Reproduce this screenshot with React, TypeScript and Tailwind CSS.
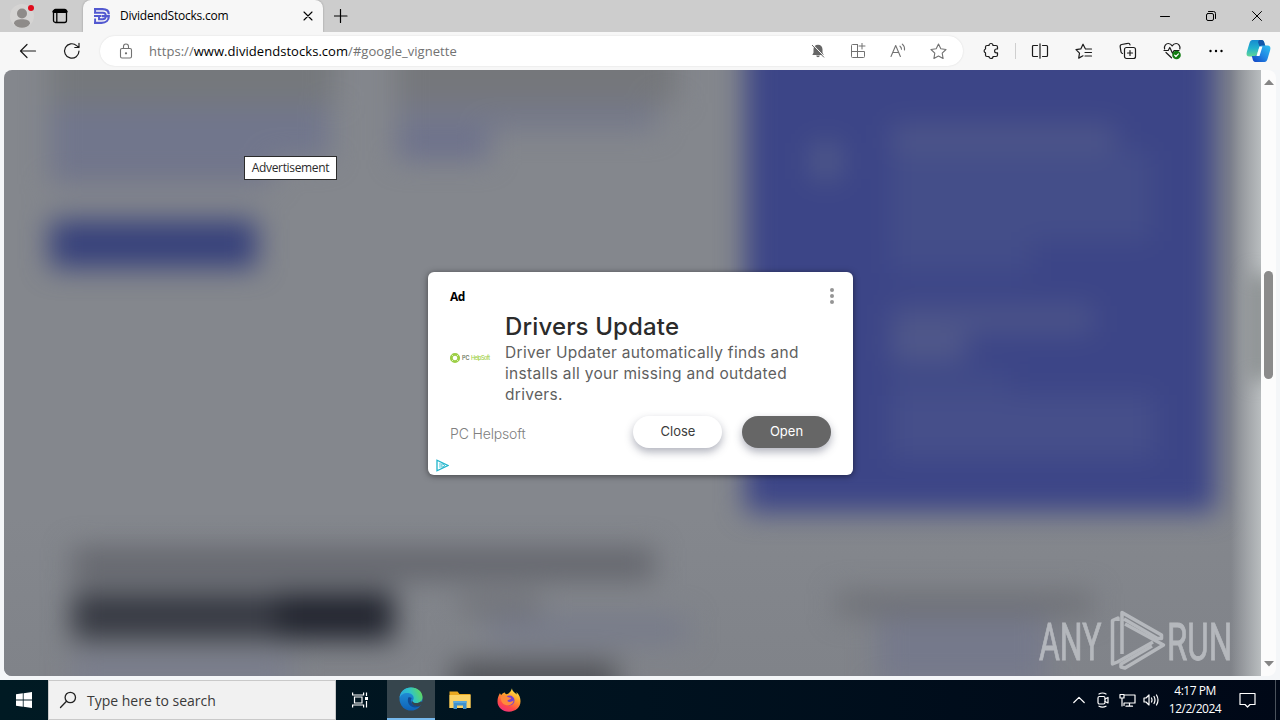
import type { ReactNode } from 'react'

const stroke = { fill: 'none', stroke: 'currentColor', strokeLinecap: 'round', strokeLinejoin: 'round' } as const

function Cell({ children, className = '' }: { children: ReactNode; className?: string }) {
  return <div className={`flex h-full shrink-0 items-center justify-center ${className}`}>{children}</div>
}

function SiteLogo() {
  return (
    <svg width="16" height="16" viewBox="0 0 16 16" fill="none" stroke="#5359d0" strokeWidth="2.200">
      <path d="M0 1.200h8.500c4 0 6.300 2 6.300 5M0 14.800h7.500c4.500 0 7.300-2.600 7.300-6.600H8" />
      <path d="M1.100 0v5M0 4.800h9c1.700 0 2.800 1.400 2.800 3.200s-1.100 3.300-3.200 3.300H5V7.800M0 8h7.500M1.100 16V10.500" strokeWidth="1.900" />
    </svg>
  )
}

function TabStrip() {
  return (
    <div className="flex h-8 bg-[#cdcdcd]">
      <Cell className="w-11">
        <svg width="30" height="28" viewBox="0 0 30 28">
          <circle cx="15" cy="14" r="12" fill="#d5d4d3" />
          <circle cx="15" cy="11.500" r="5" fill="#8e8b89" />
          <path d="M7 21.500c0-3 3.500-4.200 8-4.200s8 1.200 8 4.200c-1.500 3-4.500 4.200-8 4.200s-6.500-1.200-8-4.200z" fill="#8e8b89" />
          <circle cx="24" cy="6" r="3" fill="#e00b1c" />
        </svg>
      </Cell>
      <Cell className="w-8">
        <svg width="16" height="16" viewBox="0 0 16 16" {...stroke} strokeWidth="1.300">
          <rect x="1.500" y="1.500" width="13" height="13" rx="2" />
          <path d="M2 3.500h12" strokeWidth="3.200" />
          <path d="M4.800 5v9" />
        </svg>
      </Cell>
      <div className="ml-[7px] flex w-60 items-center rounded-t-lg bg-[#f7f7f7] pl-[11px] pr-2.5 shadow-[0_0_2px_rgba(0,0,0,0.3)]">
        <SiteLogo />
        <span className="ml-[10px] flex-1 text-[12px] tracking-[-0.240px] text-black">DividendStocks.com</span>
        <svg width="10" height="10" viewBox="0 0 10 10" {...stroke} strokeWidth="1.100">
          <path d="M1 1l8 8M9 1L1 9" />
        </svg>
      </div>
      <Cell className="w-9">
        <svg width="14" height="14" viewBox="0 0 14 14" {...stroke} strokeWidth="1.200">
          <path d="M6.500 .5v13M0 7h13" />
        </svg>
      </Cell>
      <div className="flex-1" />
      <Cell className="w-[46px]">
        <svg width="10" height="10" viewBox="0 0 10 10" {...stroke}>
          <path d="M.5 5.500h9" />
        </svg>
      </Cell>
      <Cell className="w-[46px]">
        <svg width="10" height="10" viewBox="0 0 10 10" {...stroke}>
          <rect x=".5" y="2.500" width="7" height="7" rx="1.500" />
          <path d="M2.500.5h5a2 2 0 0 1 2 2v5" />
        </svg>
      </Cell>
      <Cell className="w-[46px]">
        <svg width="10" height="10" viewBox="0 0 10 10" {...stroke}>
          <path d="M.5.5l9 9M9.500.5l-9 9" />
        </svg>
      </Cell>
    </div>
  )
}

function AddressBar() {
  return (
    <div className="flex h-[30px] w-[863px] items-center rounded-full bg-white pr-[5px] text-[#727272] shadow-[0_0_2px_rgba(0,0,0,0.12)]">
      <Cell className="w-[52px]">
        <svg width="14" height="16" viewBox="0 0 14 16" {...stroke} strokeWidth="1.100">
          <rect x="1.500" y="5.500" width="11" height="9.500" rx="1.500" />
          <path d="M4.500 5.500V3.500a2.500 2.500 0 0 1 5 0v2" />
          <circle cx="7" cy="10.300" r=".6" fill="currentColor" />
        </svg>
      </Cell>
      <div className="-ml-[3px] mt-px flex-1 whitespace-nowrap text-[13px] tracking-[0.050px]">
        https://<span className="text-black">www.dividendstocks.com</span>/#google_vignette
      </div>
      <Cell className="w-10">
        <svg width="14" height="14" viewBox="0 0 14 14">
          <path d="M7 .8c2.700 0 4.500 1.900 4.500 4.400v3.500l1.200 2.300H1.300l1.200-2.300V5.200C2.500 2.700 4.300.8 7 .8zM5.200 11.500h3.600c-.2 1.100-.9 1.700-1.800 1.700s-1.600-.6-1.800-1.700z" fill="#666" />
          <path d="M2 .8l12 12.400" stroke="#fff" />
          <path d="M1 1l12 12.400" stroke="#666" />
        </svg>
      </Cell>
      <Cell className="w-10">
        <svg width="16" height="16" viewBox="0 0 16 16" {...stroke}>
          <path d="M7.500 1.500h-5a1 1 0 0 0-1 1v11a1 1 0 0 0 1 1h11a1 1 0 0 0 1-1v-5h-13M7.500 1.500v13M12 0v6M9 3h6" />
        </svg>
      </Cell>
      <Cell className="w-10">
        <svg width="17" height="16" viewBox="0 0 17 16" {...stroke} strokeWidth="1.100">
          <path d="M1 13.500L5.700 2.500l4.700 11M2.800 9.500h5.900M10 3.200c1 .8 1.500 1.700 1.500 3M12.300 1.200c1.700 1.400 2.500 3.400 2.200 5.800" />
        </svg>
      </Cell>
      <Cell className="w-10">
        <svg width="17" height="17" viewBox="0 0 17 17" {...stroke} strokeWidth="1.100">
          <path d="M8.500 1l2.300 4.800 5.200.7-3.800 3.700.9 5.300-4.600-2.500-4.600 2.500.9-5.300L1 6.500l5.200-.7z" />
        </svg>
      </Cell>
    </div>
  )
}

function Copilot() {
  return (
    <svg width="25" height="24" viewBox="0 0 25 24">
      <defs>
        <linearGradient id="cpA" x1="0" y1="0" x2="0" y2="1">
          <stop offset="0" stopColor="#168bd0" />
          <stop offset=".5" stopColor="#22b1ce" />
          <stop offset="1" stopColor="#62d694" />
        </linearGradient>
        <linearGradient id="cpB" x1="1" y1="0" x2="0" y2="1">
          <stop offset="0" stopColor="#2fc1f1" />
          <stop offset=".5" stopColor="#2187e4" />
          <stop offset="1" stopColor="#123fc1" />
        </linearGradient>
      </defs>
      <path d="M6.500 1h9c2 0 2.500 1.500 3 3.500l.8 2.500h-3c-2 0-3 1-3.500 3l-1.500 5c-.6 2-1.500 2.500-3.500 2.500H3.500c-2.500 0-3.500-1.500-2.700-4.500L3.500 4c.6-2 1.500-3 3-3z" fill="url(#cpA)" />
      <path d="M13 1h2.500c2 0 2.500 1.500 3 3.500l.8 2.500H16c-2 0-2.500.5-3-1L12 3z" fill="#1456a9" />
      <path d="M18.500 23h-9c-2 0-2.500-1.500-3-3.500L5.800 17h2.500c2 0 3-1 3.500-3l1.500-5c.6-2 1.500-2.500 3.500-2.500h4.700c2.500 0 3.500 1.500 2.700 4.500L21.500 20c-.6 2-1.500 3-3 3z" fill="url(#cpB)" />
      <path d="M13.500 7.500h3l-3 9.500h-3z" fill="#fff" />
    </svg>
  )
}

function Toolbar() {
  return (
    <div className="flex h-[38px] items-center bg-[#f7f7f7] text-[#1b1b1b]">
      <Cell className="w-14">
        <svg width="18" height="16" viewBox="0 0 18 16" {...stroke} strokeWidth="1.200">
          <path d="M16.500 8H1.500M8 1.500L1.500 8 8 14.500" />
        </svg>
      </Cell>
      <Cell className="mr-3 w-8">
        <svg width="18" height="18" viewBox="0 0 18 18" {...stroke} strokeWidth="1.200">
          <path d="M16 9a7.200 7.200 0 1 1-2.400-5.400L16 5.500M16 1.300v4.200h-4.200" />
        </svg>
      </Cell>
      <AddressBar />
      <Cell className="ml-[7px] w-11">
        <svg width="18" height="18" viewBox="0 0 18 18" {...stroke} strokeWidth="1.200">
          <path d="M6 3.500a2 2 0 0 1 4 0h3a1.500 1.500 0 0 1 1.500 1.500v2h-1a1.900 1.900 0 0 0 0 3.800h1v2.200a1.500 1.500 0 0 1-1.500 1.500h-3a2 2 0 0 1-4 0H4A1.500 1.500 0 0 1 2.500 13v-2.200a2 2 0 0 1 0-3.800V5A1.500 1.500 0 0 1 4 3.500z" />
        </svg>
      </Cell>
      <div className="mx-px h-4 w-px bg-[#cfcfcf]" />
      <Cell className="w-[45px]">
        <svg width="18" height="16" viewBox="0 0 18 16" {...stroke} strokeWidth="1.200">
          <path d="M6.500 2.500h-4a1 1 0 0 0-1 1v9a1 1 0 0 0 1 1h4M11.500 2.500h4a1 1 0 0 1 1 1v9a1 1 0 0 1-1 1h-4M9 .8v14.400" />
        </svg>
      </Cell>
      <Cell className="w-11">
        <svg width="18" height="17" viewBox="0 0 18 17" {...stroke} strokeWidth="1.200">
          <path d="M10.200 5.500L8 1.200 5.800 5.900l-4.800.7 3.500 3.500-.8 5 4.300-2.300M10.500 6h6M10 9.500h6.500M10 13h6.500" />
        </svg>
      </Cell>
      <Cell className="w-11">
        <svg width="18" height="18" viewBox="0 0 18 18" {...stroke} strokeWidth="1.200">
          <path d="M3.500 11.500a2 2 0 0 1-1.500-1.600L1.200 4.800a2 2 0 0 1 1.600-2.300l5.800-1.200A2 2 0 0 1 11 2.800" />
          <rect x="5.500" y="5.500" width="11" height="11" rx="2" />
          <path d="M11 8.500v5M8.500 11h5" />
        </svg>
      </Cell>
      <Cell className="w-11">
        <svg width="19" height="18" viewBox="0 0 19 18" {...stroke} strokeWidth="1.200">
          <path d="M1.600 7C.8 3.800 3 1.500 5.300 1.500c1.800 0 3 1 3.900 2.400.9-1.400 2.100-2.400 3.900-2.400 2.300 0 4.500 2.300 3.700 5.500M3 10.500l5.500 5.300M1 8.500h4.200l1.600-3 2.700 5.700 1.600-2.700H16" />
          <circle cx="13.500" cy="13" r="4.300" fill="#107c10" stroke="none" />
          <path d="M11.600 13.200l1.300 1.300 2.500-2.600" stroke="#fff" />
        </svg>
      </Cell>
      <Cell className="w-11">
        <svg width="16" height="4" viewBox="0 0 16 4">
          <circle cx="2.500" cy="2" r="1.200" />
          <circle cx="8" cy="2" r="1.200" />
          <circle cx="13.500" cy="2" r="1.200" />
        </svg>
      </Cell>
      <Cell className="w-10">
        <Copilot />
      </Cell>
    </div>
  )
}

// The article behind the vignette ad, dimmed and blurred out
function BlurredPage() {
  return (
    <div className="absolute -top-10 left-0 h-[700px] w-[1257px] blur-[14px]">
      <div className="flex h-[482px]">
        <div className="ml-[46px] w-[347px]">
          <div className="h-[75px] w-[285px] bg-[#75787c]" />
          <div className="h-[55px] w-[280px] bg-[#71768c]" />
          <div className="h-[24px] w-[222px] bg-[#71758b]" />
          <div className="mt-[36px] h-[48px] w-[207px] bg-[#37417b]" />
        </div>
        <div className="w-[348px]">
          <div className="h-[73px] w-[280px] bg-[#75777b]" />
          <div className="h-[27px] w-[260px] bg-[#74788a]" />
          <div className="h-[30px] w-[92px] bg-[#6d718c]" />
        </div>
        <div className="flex w-[471px] bg-[#3c4587] pt-[95px]">
          <div className="ml-[66px] mt-[18px] h-[36px] w-[30px] bg-[#515a89]" />
          <div className="ml-[50px] w-[260px]">
            <div className="h-[26px] w-[225px] bg-[#4e5689]" />
            <div className="h-[90px] bg-[#444e89]" />
            <div className="h-[32px] w-[140px] bg-[#434d89]" />
            <div className="mt-[32px] h-[28px] w-[202px] bg-[#4c5489]" />
            <div className="h-[28px] w-[75px] bg-[#51598a]" />
            <div className="mt-[8px] h-[26px] w-[120px] bg-[#414b88]" />
            <div className="h-[64px] w-[264px] bg-[#464f8a]" />
          </div>
        </div>
      </div>
      <div className="flex pt-[36px]">
        <div className="ml-[68px] w-[380px]">
          <div className="h-[32px] w-[582px] bg-[#64666d]" />
          <div className="mt-[12px] flex h-[48px] w-[322px] bg-[#373a43]">
            <div className="ml-[205px] w-[117px] bg-[#22252f]" />
          </div>
          <div className="mt-[16px] h-[30px] w-[220px] bg-[#797d8d]" />
        </div>
        <div className="w-[385px] pt-[46px]">
          <div className="ml-[8px] h-[22px] w-[80px] bg-[#717379]" />
          <div className="ml-[36px] h-[28px] w-[200px] bg-[#777b8a]" />
          <div className="mt-[18px] h-[40px] w-[165px] bg-[#515358]" />
        </div>
        <div className="pt-[44px]">
          <div className="h-[24px] w-[255px] bg-[#6e7076]" />
          <div className="ml-[40px] h-[70px] w-[170px] bg-[#75798b]" />
        </div>
      </div>
    </div>
  )
}

function AdCard() {
  return (
    <div className="absolute left-[424px] top-[202px] flex h-[203px] w-[425px] flex-col rounded-md bg-white pl-[22px] pr-[22px] font-[Inter,sans-serif] shadow-[0_1px_6px_rgba(0,0,0,0.5)]">
      <div className="flex h-[42px] items-end justify-between pt-4">
        <span className="self-start font-['Open_Sans',sans-serif] text-[12px] font-bold leading-[18px] tracking-[-0.500px] text-black">Ad</span>
        <svg className="-mr-[5px] self-start" width="8" height="16" viewBox="0 0 8 16" fill="#959595">
          <circle cx="4" cy="2" r="2" />
          <circle cx="4" cy="8" r="2" />
          <circle cx="4" cy="14" r="2" />
        </svg>
      </div>
      <div className="-mt-px flex h-[93px]">
        <div className="flex w-[55px] items-center pb-[3px]">
          <svg width="41" height="12" viewBox="0 0 41 12">
            <circle cx="5" cy="6" r="3.700" fill="none" stroke="#9ccf45" strokeWidth="2.800" />
            <path d="M1 2l2.500 2.500M9 10L6.500 7.500M1 10l2.500-2.500M9 2L6.500 4.500" stroke="#dcefbc" />
            <text x="12" y="8" fontSize="5.500" fontWeight="600" fill="#6f7a64" textLength="7.500">PC</text>
            <text x="21" y="8" fontSize="5.500" fontWeight="500" fill="#9ccf45" textLength="19">HelpSoft</text>
          </svg>
        </div>
        <div className="flex-1 whitespace-nowrap">
          <h1 className="text-[24px] font-medium leading-[28px] tracking-[0.150px] text-[#2b2b2b]">Drivers Update</h1>
          <p className="mt-px text-[15.500px] leading-[21px] tracking-[0.320px] text-[#5f5f5f]">
            Driver Updater automatically finds and
            <br />
            installs all your missing and outdated
            <br />
            drivers.
          </p>
        </div>
      </div>
      <div className="mt-[10px] flex h-8 items-center">
        <span className="mt-[3px] flex-1 text-[14px] font-light tracking-[-0.150px] text-[#808080]">PC Helpsoft</span>
        <button className="mr-5 h-8 w-[89px] rounded-full bg-white pl-px text-[13px] text-[#3c3c3c] shadow-[0_4px_8px_rgba(60,64,90,0.4)]">Close</button>
        <button className="h-8 w-[89px] rounded-full bg-[#666666] text-[13px] text-white shadow-[0_4px_8px_rgba(60,64,90,0.4)]">Open</button>
      </div>
      <svg className="-ml-[14px] mt-[11px]" width="13" height="13" viewBox="0 0 13 13" fill="none" stroke="#1fb5cc" strokeWidth="1.300">
        <path d="M1 1.200v10.600L12 6.500z" />
        <path d="M4 3.800v5M5.800 4.500v4l3.200-2z" strokeWidth=".8" />
      </svg>
    </div>
  )
}

function Watermark() {
  return (
    <svg className="absolute left-[1030px] top-[535px]" width="205" height="70" viewBox="0 0 205 70" opacity=".75">
      <g fill="#c7cace" stroke="#c7cace" strokeWidth=".9" fontFamily="Roboto, sans-serif" fontSize="52">
        <text transform="translate(5 54.500) scale(.615 1)">ANY</text>
        <text transform="translate(133 54.500) scale(.635 1)">RUN</text>
      </g>
      <g fill="none" stroke="#c7cace" strokeWidth="3.500" strokeLinejoin="round">
        <path d="M84 16v-3l-5.500 2.500v43.500l5-2L119 37" />
        <path d="M88 49V7.500l39.500 22.500v3.500h-4L90 14" />
        <path d="M91 19l38.500 21L91 63l-4-1v-3l31-18" />
      </g>
    </svg>
  )
}

function Viewport() {
  return (
    <div className="flex h-[610px] bg-[#f4f6f8] pb-1 pl-1 pr-1">
      <div className="relative h-[606px] w-[1257px] overflow-hidden rounded-l-lg bg-[#84878d]">
        <div className="absolute bottom-0 left-0 h-[160px] w-full bg-linear-to-b from-transparent to-[#808389]" />
        <BlurredPage />
        <div className="absolute right-0 top-0 h-full w-[30px] bg-linear-to-r from-transparent to-[#b9bdbf]" />
        <div className="absolute -right-[8px] top-[205px] h-[105px] w-[18px] bg-[#7f8485] blur-[10px]" />
        <AdCard />
        <Watermark />
        <div className="absolute left-[240px] top-[86px] flex h-6 w-[93px] items-center justify-center border border-[#2b2b2b] bg-white text-[12px] tracking-[-0.350px] text-[#2b2b2b]">
          Advertisement
        </div>
      </div>
      <div className="flex w-[15px] flex-col items-center rounded-r-lg bg-[#fcfcfc] pb-[9px] pt-[9px]">
        <svg width="10" height="6" viewBox="0 0 10 6" fill="#858585">
          <path d="M0 6l5-5.500L10 6z" />
        </svg>
        <div className="mt-[186px] h-[108px] w-[9px] rounded-full bg-[#8b8b8b]" />
        <div className="flex-1" />
        <svg width="10" height="6" viewBox="0 0 10 6" fill="#858585">
          <path d="M0 0l5 5.500L10 0z" />
        </svg>
      </div>
    </div>
  )
}

function Edge() {
  return (
    <svg width="24" height="24" viewBox="0 0 24 24">
      <defs>
        <linearGradient id="edA" x1="0" y1=".6" x2="1" y2=".3">
          <stop offset="0" stopColor="#2aa5e0" />
          <stop offset=".5" stopColor="#2fc3c9" />
          <stop offset="1" stopColor="#62d957" />
        </linearGradient>
        <linearGradient id="edB" x1="0" y1="0" x2="0" y2="1">
          <stop offset="0" stopColor="#2498dc" />
          <stop offset="1" stopColor="#0f62b8" />
        </linearGradient>
      </defs>
      <circle cx="12" cy="12" r="11.500" fill="url(#edB)" />
      <path d="M.5 11C1 4.500 6 .5 12 .5c7 0 11.500 4.500 11.500 9.500 0 4-3 6-6 6-2.500 0-4-1-4-1.800 0-.7 1.200-1.200 1.200-3.200 0-2.800-2.700-5-6.500-5C4.500 6 1.500 8 .5 11z" fill="url(#edA)" />
      <path d="M9.300 10.500c-1.600 4.500 1 9.500 6.200 10 2.500.2 4.800-.8 6.300-2.200-3 1-7.300.8-9.300-2.500-1-1.700-.8-3.300.2-4.800-1-.8-2.500-1-3.400-.5z" fill="#114b93" />
      <path d="M13.500 14.200c0 .8 1.500 1.800 4 1.800 1.700 0 3.400-.6 4.600-1.800l1.900 2-3.200 2.800c-4 .8-8-1-8.300-4.500z" fill="#36454d" />
    </svg>
  )
}

function Explorer() {
  return (
    <svg width="22" height="20" viewBox="0 0 22 20">
      <path d="M.5 1.500h8l2 2.500h11v14H.5z" fill="#e9a820" />
      <path d="M.5 5h21v13H.5z" fill="#fbd367" />
      <path d="M4.500 11h13v8H14v-3.500H8V19H4.500z" fill="#3f92cf" />
      <path d="M4.500 11h13v2h-13z" fill="#5aa9dd" />
    </svg>
  )
}

function Firefox() {
  return (
    <svg width="24" height="24" viewBox="0 0 24 24">
      <defs>
        <linearGradient id="ffA" x1=".8" y1="0" x2=".3" y2="1">
          <stop offset="0" stopColor="#fff14a" />
          <stop offset=".4" stopColor="#ffa02b" />
          <stop offset=".75" stopColor="#ff4a47" />
          <stop offset="1" stopColor="#f0307a" />
        </linearGradient>
      </defs>
      <path d="M15 .3c0 3.200 3 4.200 4.500 6.200.3-1 .1-1.800-.2-2.500 3 2.500 4.200 6 4.200 9.300 0 6-5 10.400-11.500 10.400S.5 19.500.5 13.500C.5 10 1.500 7.500 3 5c.2 1 .6 1.500 1.300 2 .8-1.500 2.400-2.200 3.700-2.500 0 .8.500 1.500 1.300 1.800C11 6.300 14 4 15 .3z" fill="url(#ffA)" />
      <circle cx="12.500" cy="12.500" r="5" fill="#7641d0" />
      <path d="M3.500 9c3-2 5.500-1.300 7.500 0 1.200.8 3 .4 3 1.200 0 1.400-3.700 1.400-3.700 2.900 2 1.800 4.700.4 6.200-.6 0 4.100-5 5.800-8.500 4.300S4 12.500 3.500 9z" fill="#ff8a3b" />
    </svg>
  )
}

function Taskbar() {
  return (
    <div className="flex h-10 bg-linear-to-r from-[#001a23] via-[#00121f] to-[#000817] text-white">
      <Cell className="w-12">
        <svg width="16" height="16" viewBox="0 0 16 16" fill="#fff">
          <path d="M0 2.300L6.800 1.300v6.300H0zM7.600 1.200L16 0v7.600H7.600zM0 8.400h6.800v6.300L0 13.700zM7.600 8.400H16V16l-8.400-1.200z" />
        </svg>
      </Cell>
      <div className="flex w-72 items-center border border-[#c9c9c9] bg-[#f1f1f1] pl-[10px] text-[#222]">
        <svg width="18" height="18" viewBox="0 0 18 18" {...stroke} strokeWidth="1.300">
          <circle cx="11.300" cy="6.500" r="5.200" />
          <path d="M7.500 10.200L1.500 16.500" />
        </svg>
        <span className="ml-[10px] text-[14px] text-[#3a3a3a]">Type here to search</span>
      </div>
      <Cell className="ml-px w-[50px] pr-1">
        <svg width="17" height="16" viewBox="0 0 17 16" fill="none" stroke="#fff" strokeWidth="1.200">
          <path d="M.6 .5v2.500h11v-2.500M.6 15.500v-2.500h11v2.500M2.500 5h7.500v6h-7.500zM14.500 .5V4M14.500 9v6.500" />
          <path d="M13 5h3v3h-3z" fill="#fff" stroke="none" />
        </svg>
      </Cell>
      <Cell className="w-12 border-b-2 border-[#76b9ed] bg-[#36454d]">
        <Edge />
      </Cell>
      <Cell className="w-[49px]">
        <Explorer />
      </Cell>
      <Cell className="w-[49px]">
        <Firefox />
      </Cell>
      <div className="flex-1" />
      <Cell className="w-6">
        <svg width="12" height="8" viewBox="0 0 12 8" {...stroke} strokeWidth="1.200">
          <path d="M.8 6.500L6 1.300l5.200 5.200" />
        </svg>
      </Cell>
      <Cell className="w-6">
        <svg width="14" height="16" viewBox="0 0 14 16" {...stroke} strokeWidth="1.200">
          <rect x="2" y="4.500" width="7" height="7.500" rx="1.500" />
          <path d="M9 7l3-1.500v5.500l-3-1.500M3 2Q6.500 0 10 2M3 14.200q3.500 1.800 7 0" />
        </svg>
      </Cell>
      <Cell className="w-6">
        <svg width="17" height="14" viewBox="0 0 17 14" {...stroke} strokeWidth="1.200">
          <path d="M5.500 2h10.500v8H5v2.500M10.500 10v3M7 13.200h6.500M1 1.500h4v3.500H1zM3 5v8" />
        </svg>
      </Cell>
      <Cell className="w-6">
        <svg width="17" height="14" viewBox="0 0 17 14" {...stroke} strokeWidth="1.200">
          <path d="M1 5h2l3-3v10L3 9H1zM8.500 5q1 2 0 4M11 3.500q2 3.500 0 7M13.500 2q3 5 0 10" />
        </svg>
      </Cell>
      <div className="flex w-[64px] flex-col items-center justify-center text-[12px] leading-[18px]">
        <span className="tracking-[-0.500px]">4:17 PM</span>
        <span className="tracking-[-0.500px]">12/2/2024</span>
      </div>
      <Cell className="w-10">
        <svg width="17" height="17" viewBox="0 0 17 17" {...stroke} strokeWidth="1.200">
          <path d="M1 1.500h15v11h-5L8.500 15 6 12.500H1z" />
        </svg>
      </Cell>
      <div className="ml-[8px] w-[5px] border-l border-[#4a525c]" />
    </div>
  )
}

export default function App() {
  return (
    <main className="flex h-[720px] w-[1280px] flex-col overflow-hidden font-['Open_Sans','Noto_Sans',sans-serif]">
      <TabStrip />
      <Toolbar />
      <Viewport />
      <Taskbar />
    </main>
  )
}
